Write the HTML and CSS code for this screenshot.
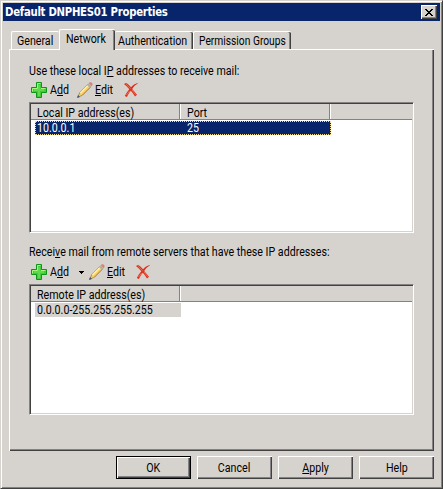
FILE: index.html
```html
<!DOCTYPE html>
<html lang="en">
<head>
<meta charset="utf-8">
<title>Default DNPHES01 Properties</title>
<link rel="stylesheet" href="styles.css">
</head>
<body>
<svg class="defs" aria-hidden="true">
  <symbol id="add" viewBox="0 0 16 16">
    <path d="M5.5 .5h5v5h5v5h-5v5h-5v-5h-5v-5h5z" fill="#45c83b" stroke="#0c9618"/>
    <path d="M6.500 6.500V1.500h3M1.500 9.500v-3h5M10 6.500h4.500" fill="none" stroke="#a8f580"/>
    <path d="M7 3h2v4h4v2H9v5H7V9H3V7h4z" fill="#5edb4b"/>
  </symbol>
  <symbol id="pencil" viewBox="0 0 16 16">
    <path d="M.8 15.200l2-4.700 8.500-8.500 2.700 2.700-8.500 8.500z" fill="#f8cf69" stroke="#9b7f48" stroke-width=".8"/>
    <path d="M3.500 11l8-8" stroke="#fff2ad" stroke-width="1.400"/>
    <path d="M5.500 13l8-8" stroke="#c29445"/>
    <path d="M10.500 2.500l3 3" stroke="#a9b4bd" stroke-width="1.600"/>
    <path d="M11.700 1.300l1-1h1.500l1.300 1.300V3l-1 1.200z" fill="#d9827d"/>
    <path d="M0 16l1-3 2 2z" fill="#4c5266"/>
  </symbol>
  <symbol id="delete" viewBox="0 0 14 14">
    <path d="M0 1l2-1c2 1 3.500 2.500 5 4.300C9 2 11 .7 13.500 0l.3.600C11 2.300 9.500 4 8.200 6c1.600 2 3 3.700 4.800 5.800L11 13.500C9.500 11 8.200 9.300 6.800 7.800 5 10 3.800 12 3 14L.8 13C2 10.500 3.500 8.300 5.300 6.200 3.800 4.300 2 2.500 0 1z" fill="#df2f1d"/>
    <path d="M2 1.200l4.700 4.500M5.500 8L2.500 12M8 6.800l3.500 4.800" stroke="#f47a60" fill="none" stroke-width=".8"/>
  </symbol>
</svg>
<main class="window">
  <header class="title"><h1>Default DNPHES01 Properties</h1>
    <button class="close" aria-label="Close"><svg width="8" height="7" viewBox="0 0 8 7" shape-rendering="crispEdges"><path d="M0 0h2v1h1v1h2V1h1V0h2v1H7v1H6v1H5v1h1v1h1v1h1v1H6V6H5V5H3v1H2v1H0V6h1V5h1V4h1V3H2V2H1V1H0z"/></svg></button>
  </header>
  <nav class="tabs">
    <div class="tab general"><span class="text">General</span></div>
    <div class="tab active"><span class="text">Network</span></div>
    <div class="tab auth"><span class="text">Authentication</span></div>
    <div class="tab perm"><span class="text">Permission Groups</span></div>
  </nav>
  <section class="panel">
    <p class="label"><span class="text">Use these local I<u>P</u> addresses to receive mail:</span></p>
    <div class="tools">
      <svg class="plus"><use href="#add"/></svg><div class="add"><span class="text">A<u>d</u>d</span></div>
      <svg class="pencil"><use href="#pencil"/></svg><div class="edit"><span class="text"><u>E</u>dit</span></div>
      <svg class="delete"><use href="#delete"/></svg>
    </div>
    <div class="list local">
      <div class="head"><div class="cell c1"><span class="text">Local IP address(es)</span></div><div class="cell c2"><span class="text">Port</span></div></div>
      <div class="row selected"><div class="ip"><span class="text">10.0.0.1</span></div><div><span class="text">25</span></div></div>
    </div>
    <p class="label second"><span class="text">Recei<u>v</u>e mail from remote servers that have these IP addresses:</span></p>
    <div class="tools lower">
      <svg class="plus"><use href="#add"/></svg><div class="add"><span class="text">A<u>d</u>d</span></div>
      <svg class="arrow" viewBox="0 0 5 3" shape-rendering="crispEdges"><path d="M0 0h5v1H4v1H3v1H2V2H1V1H0z"/></svg>
      <svg class="pencil"><use href="#pencil"/></svg><div class="edit"><span class="text"><u>E</u>dit</span></div>
      <svg class="delete"><use href="#delete"/></svg>
    </div>
    <div class="list remote">
      <div class="head"><div class="cell c1"><span class="text">Remote IP address(es)</span></div></div>
      <div class="row inactive"><span class="text">0.0.0.0-255.255.255.255</span></div>
    </div>
  </section>
  <footer class="buttons">
    <button class="btn default"><span class="text">OK</span></button>
    <button class="btn"><span class="text">Cancel</span></button>
    <button class="btn"><span class="text"><u>A</u>pply</span></button>
    <button class="btn"><span class="text">Help</span></button>
  </footer>
</main>
</body>
</html>
```
FILE: styles.css
```css
* { box-sizing: border-box; }
body { margin: 0; background: #d6d3ce; color: #000; font: 12.5px/14px Roboto, "Liberation Sans", sans-serif; white-space: nowrap; }
h1, p { margin: 0; }
button { padding: 0; color: #000; font: inherit; border: 0; border-radius: 0; background: #d6d3ce; }
u { text-decoration-thickness: 1px; text-underline-offset: 1px; text-decoration-skip-ink: none; }
.defs { display: none; }
.text { display: block; width: max-content; transform: scaleX(.853); transform-origin: left; }
.window { width: 443px; height: 489px; padding: 2px 1px 1px 2px; border: 1px solid; border-color: #d6d3ce #424142 #424142 #d6d3ce; box-shadow: inset 1px 1px #fff, inset -1px -1px #848284; }
.title { height: 18px; width: 437px; display: flex; align-items: center; justify-content: space-between; padding: 0 3px 0 2px; background: #08246b; color: #fff; }
.title h1 { font: bold 12px/18px "DejaVu Sans Condensed", sans-serif; letter-spacing: -.3px; transform: scaleX(.94); transform-origin: left; }
.close { width: 16px; height: 14px; display: flex; align-items: center; justify-content: center; box-shadow: inset 1px 1px #fff, inset -1px -1px #424142, inset -2px -2px #848284; }
.tabs { height: 28px; padding: 0 0 0 8px; display: flex; align-items: flex-end; }
.tab { height: 18px; padding: 2px 0 0 6px; border: solid #fff; border-width: 1px 0 0 1px; border-radius: 2px 2px 0 0; box-shadow: inset -1px 0 #424142, inset -2px 0 #848284; }
.general { width: 48px; padding-left: 5px; box-shadow: none; }
.active { width: 56px; height: 21px; margin-bottom: -1px; padding: 2px 0 0 6px; position: relative; z-index: 1; background: #d6d3ce; }
.auth { width: 78px; padding-left: 3px; border-left: 0; }
.perm { width: 98px; padding-left: 5px; }
.perm .text { transform: scaleX(.82); }
.panel { width: 425px; height: 402px; margin-left: 6px; padding: 14px 20px 0; border-top: 1px solid #fff; border-left: 1px solid #fff; box-shadow: inset -1px -1px #424142, inset -2px -2px #848284; }
.label { height: 14px; margin-left: -1px; }
.tools { height: 16px; margin: 4px 0 4px 1px; display: flex; align-items: center; }
.lower { margin-top: 5px; }
.plus { width: 16px; height: 16px; margin-right: 3px; }
.add { width: 27px; }
.pencil { width: 16px; height: 16px; margin-right: 2px; }
.edit { width: 29px; }
.delete { width: 14px; height: 14px; }
.arrow { width: 5px; height: 3px; margin: 1px 5px 0 2px; }
.list { width: 385px; background: #fff; border: 1px solid; border-color: #848284 #fff #fff #848284; padding: 1px; box-shadow: inset 1px 1px #424142, inset -1px -1px #d6d3ce; margin-left: -1px; }
.local { height: 131px; }
.remote { height: 131px; }
.head { height: 16px; display: flex; background: #d6d3ce; border-bottom: 1px solid #848284; }
.cell { height: 100%; padding: 3px 0 0 6px; border-right: 1px solid #fff; box-shadow: inset -1px 0 #848284; line-height: 12px; }
.c1 { width: 150px; }
.c2 { width: 150px; padding-left: 6px; }
.row { height: 14px; margin: 1px 0 0 4px; padding-left: 2px; }
.selected { width: 296px; display: flex; color: #fff; background: #08246b; outline: 1px dotted #f7db94; outline-offset: -1px; }
.ip { width: 150px; }
.inactive { width: 146px; background: #d6d3ce; }
.second { margin-top: 12px; }
.buttons { display: flex; gap: 6px; margin: 5px 0 0 113px; }
.btn { width: 75px; height: 23px; box-shadow: inset 1px 1px #fff, inset -1px -1px #424142, inset -2px -2px #848284; }
.btn .text { margin: 0 auto; transform-origin: center; }
.default { border: 1px solid #000; }
```
